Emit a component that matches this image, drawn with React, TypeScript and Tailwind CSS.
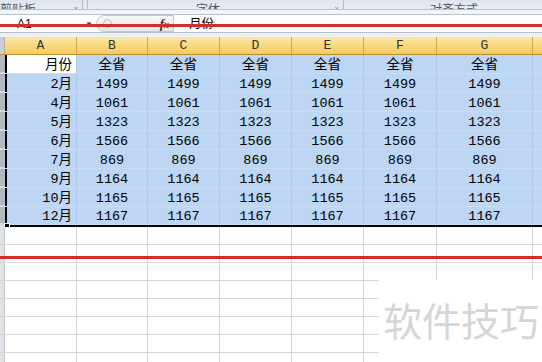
import React from 'react';

const cols = ['A', 'B', 'C', 'D', 'E', 'F', 'G'];
// widths of A..G in px, H takes the rest
const widths = ['w-[72px]', 'w-[71px]', 'w-[72px]', 'w-[72px]', 'w-[72px]', 'w-[73px]', 'w-[96px]'];

const rows: [string, string][] = [
  ['2月', '1499'],
  ['4月', '1061'],
  ['5月', '1323'],
  ['6月', '1566'],
  ['7月', '869'],
  ['9月', '1164'],
  ['10月', '1165'],
  ['12月', '1167'],
];

const cellFont = 'font-["Liberation_Mono","Noto_Sans_CJK_SC",monospace] text-[13.5px] leading-none text-black';

const SelRow: React.FC<{ label: string; value: string; h: string; first?: boolean }> = ({ label, value, h, first }) => (
  <div className={`flex ${h} border-b border-[#cadcf2]`}>
    <div className="w-[5px] shrink-0 bg-[#b3b8c0] border-b border-[#d3d7dd]" />
    <div
      className={`w-[72px] shrink-0 border-l-2 border-l-black border-r border-r-[#aec7e6] flex items-end justify-end pr-[4px] pb-[1px] ${
        first ? 'bg-white' : 'bg-[#bcd6f4]'
      } ${cellFont}`}
    >
      {label}
    </div>
    {widths.slice(1).map((w, i) => (
      <div key={i} className={`${w} shrink-0 bg-[#bcd6f4] border-r border-[#aec7e6] flex items-end justify-center pb-[1px] ${cellFont}`}>
        {value}
      </div>
    ))}
    <div className="flex-1 bg-[#bcd6f4]" />
  </div>
);

const EmptyRow: React.FC = () => (
  <div className="flex h-[18px] border-b border-[#d6d6d6]">
    <div className="w-[5px] shrink-0 bg-[#dfe3e8] border-r border-[#c4c8ce]" />
    {widths.map((w, i) => (
      <div key={i} className={`${w} shrink-0 border-r border-[#d6d6d6]`} />
    ))}
    <div className="flex-1" />
  </div>
);

export default function App() {
  return (
    <div className="relative w-[542px] h-[362px] overflow-hidden bg-white">
      {/* ribbon group labels, cut at the top */}
      <div className="relative h-[10px] overflow-hidden bg-gradient-to-b from-[#dde5ef] to-[#e8edf3] border-b border-[#b9c0c9] text-[12px] leading-none text-[#4c5563] font-['Noto_Sans_CJK_SC',sans-serif]">
        <div className="flex items-end h-full">
          <span className="w-[72px] -mb-[6px]">剪贴板</span>
          <span className="w-[10px] text-[9px] text-[#8a929c] -mb-[1px]">⌄</span>
          <span className="w-[1px] h-full bg-[#b6bec8]" />
          <span className="w-[4px]" />
          <span className="w-[1px] h-full bg-[#b6bec8]" />
          <span className="w-[108px]" />
          <span className="w-[137px] -mb-[6px]">字体</span>
          <span className="w-[10px] text-[9px] text-[#8a929c] -mb-[1px]">⌄</span>
          <span className="w-[1px] h-full bg-[#b6bec8]" />
          <span className="w-[86px]" />
          <span className="-mb-[6px]">对齐方式</span>
        </div>
      </div>

      {/* formula bar */}
      <div className="h-[4px] bg-[#f2f4f7]" />
      <div className="flex h-[19px] bg-white border-y border-[#b9bfc7]">
        <div className="w-[82px] flex items-center pl-[17px] font-['Liberation_Sans',sans-serif] text-[12px] text-black">A1</div>
        <div className="w-[14px] flex items-center justify-center text-[8px] text-[#444]">▼</div>
        <div className="w-[78px] flex items-center justify-between rounded-l-full bg-gradient-to-b from-[#f7f8fa] to-[#e4e7eb] border border-[#c2c7ce] pl-[6px] pr-[4px]">
          <span className="w-[9px] h-[9px] rounded-full border border-[#b8bdc4] bg-[#eef0f3]" />
          <span className="font-['Liberation_Serif',serif] italic font-bold text-[13px] text-[#333]">f<span className="text-[10px]">x</span></span>
        </div>
        <div className="flex-1 flex items-center pl-[15px] font-['Noto_Sans_CJK_SC',sans-serif] text-[12.5px] text-black">月份</div>
      </div>
      <div className="h-[4px] bg-[#eef1f4]" />

      {/* column headers */}
      <div className="flex h-[18px] border-b border-[#b98f2f]">
        <div className="w-[5px] shrink-0 bg-[#c9ced6] border-r border-[#a9aeb6]" />
        {cols.map((c, i) => (
          <div
            key={c}
            className={`${widths[i]} shrink-0 bg-gradient-to-b from-[#fbe7a5] to-[#f5cb58] border-r border-[#d3a744] flex items-center justify-center font-["Liberation_Mono",monospace] text-[13px] text-[#333]`}
          >
            {c}
          </div>
        ))}
        <div className="flex-1 bg-gradient-to-b from-[#fbe7a5] to-[#f5cb58]" />
      </div>

      {/* selected block */}
      <SelRow label="月份" value="全省" h="h-[19px]" first />
      {rows.map(([l, v], i) => (
        <SelRow key={l} label={l} value={v} h={i === rows.length - 1 ? 'h-[18px]' : 'h-[19px]'} />
      ))}

      {/* selection bottom border */}
      <div className="relative flex h-[2px]">
        <div className="w-[5px] bg-[#dfe3e8]" />
        <div className="flex-1 bg-black" />
        <div className="absolute left-[4px] -top-[2px] w-[6px] h-[5px] bg-black border border-white" />
      </div>

      {/* empty rows */}
      {Array.from({ length: 8 }).map((_, i) => (
        <EmptyRow key={i} />
      ))}

      {/* watermark */}
      <div className="absolute left-[379px] top-[280px] right-0 bottom-0 bg-white">
        <div className="pl-[4px] pt-[20px] font-['Noto_Sans_CJK_SC',sans-serif] text-[39px] leading-none text-[#d6d6d6] whitespace-nowrap">
          软件技巧
        </div>
      </div>

      {/* red annotation lines */}
      <div className="absolute left-0 right-0 top-[24px] h-[3px] bg-[#d32f2a]" />
      <div className="absolute left-0 right-0 top-[256px] h-[3px] bg-[#d32f2a]" />
    </div>
  );
}
